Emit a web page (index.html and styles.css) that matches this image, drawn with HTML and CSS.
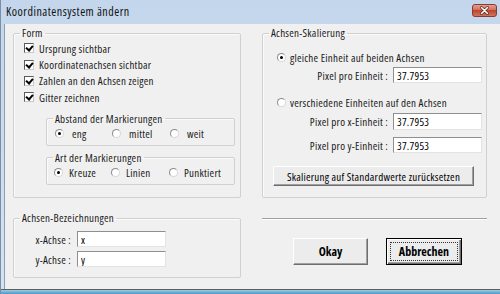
FILE: index.html
```html
<!DOCTYPE html>
<html lang="de">
<head>
  <meta charset="UTF-8" />
  <title>Koordinatensystem ändern</title>
  <link rel="stylesheet" href="styles.css">
</head>
<body>
  <div class="window">
    <div class="titlebar">
      <span class="title">Koordinatensystem ändern</span>
      <svg class="close" width="25" height="13" viewBox="0 0 25 13">
        <defs>
          <linearGradient id="red" x1="0" y1="0" x2="0" y2="1">
            <stop offset="0" stop-color="#e8a493"/>
            <stop offset="0.45" stop-color="#d2705d"/>
            <stop offset="0.5" stop-color="#c0432f"/>
            <stop offset="1" stop-color="#d07a5e"/>
          </linearGradient>
        </defs>
        <rect x="0.5" y="0.5" width="24" height="12" rx="2.5" fill="url(#red)" stroke="#8a3a2e"/>
        <path d="M9.5 3.5 L15.5 9.5 M15.5 3.5 L9.5 9.5" stroke="#5a2018" stroke-width="3" stroke-linecap="round"/>
        <path d="M9.5 3.5 L15.5 9.5 M15.5 3.5 L9.5 9.5" stroke="#ffffff" stroke-width="1.6" stroke-linecap="round"/>
      </svg>
    </div>

    <div class="client">
      <div class="top-row">
        <!-- Form -->
        <fieldset class="group group-form">
          <legend>Form</legend>
          <div class="checks">
            <label class="opt"><span class="check on"></span>Ursprung sichtbar</label>
            <label class="opt"><span class="check on"></span>Koordinatenachsen sichtbar</label>
            <label class="opt"><span class="check on"></span>Zahlen an den Achsen zeigen</label>
            <label class="opt"><span class="check on"></span>Gitter zeichnen</label>
          </div>
          <fieldset class="group sub sub-first">
            <legend>Abstand der Markierungen</legend>
            <div class="radios">
              <label class="opt"><span class="radio on"></span>eng</label>
              <label class="opt"><span class="radio"></span>mittel</label>
              <label class="opt"><span class="radio"></span>weit</label>
            </div>
          </fieldset>
          <fieldset class="group sub">
            <legend>Art der Markierungen</legend>
            <div class="radios tight">
              <label class="opt"><span class="radio on"></span>Kreuze</label>
              <label class="opt"><span class="radio"></span>Linien</label>
              <label class="opt"><span class="radio"></span>Punktiert</label>
            </div>
          </fieldset>
        </fieldset>

        <!-- Achsen-Skalierung -->
        <fieldset class="group group-scale">
          <legend>Achsen-Skalierung</legend>
          <label class="opt scale-radio first"><span class="radio on"></span>gleiche Einheit auf beiden Achsen</label>
          <div class="field-row r1"><span>Pixel pro Einheit :</span><input class="box" value="37.7953"></div>
          <label class="opt scale-radio second"><span class="radio"></span>verschiedene Einheiten auf den Achsen</label>
          <div class="field-row r2"><span>Pixel pro x-Einheit :</span><input class="box tall" value="37.7953"></div>
          <div class="field-row r3"><span>Pixel pro y-Einheit :</span><input class="box" value="37.7953"></div>
          <button class="btn reset">Skalierung auf Standardwerte zurücksetzen</button>
        </fieldset>
      </div>

      <div class="bottom-row">
        <fieldset class="group group-names">
          <legend>Achsen-Bezeichnungen</legend>
          <div class="names">
            <span>x-Achse :</span><input class="box" value="x">
            <span>y-Achse :</span><input class="box" value="y">
          </div>
        </fieldset>

        <div class="actions">
          <div class="separator"></div>
          <div class="buttons">
            <button class="btn big">Okay</button>
            <button class="btn big default"><span class="focus">Abbrechen</span></button>
          </div>
        </div>
      </div>
    </div>
    <div class="frame-bottom"></div>
  </div>
</body>
</html>
```

FILE: styles.css
```css
* {
  box-sizing: border-box;
}
body {
  margin: 0;
  overflow: hidden;
  background: #f0f0f0;
}
.window {
  width: 500px;
  height: 294px;
  display: flex;
  flex-direction: column;
  background: linear-gradient(#c3d6ec, #d5e3f3);
  border-left: 1px solid #7b8ea4;
  font-family: "Open Sans", sans-serif;
  font-stretch: 75%;
  font-size: 11px;
  letter-spacing: 0.25px;
  color: #1a1a1a;
}
.titlebar {
  height: 24px;
  flex: none;
  display: flex;
  align-items: flex-start;
  justify-content: space-between;
  padding: 5px 3px 0 5px;
}
.title {
  font-size: 12px;
  letter-spacing: 0.5px;
  line-height: 14px;
  color: #111;
}
.close {
  margin-top: -1px;
  display: block;
}
.client {
  flex: 1;
  margin-left: 3px;
  border-left: 1px solid #8d9db1;
  background: #f0f0f0;
  padding: 2px 13px 0 8px;
}
.frame-bottom {
  height: 5px;
  flex: none;
  border-top: 1px solid #5e5e5e;
  background: linear-gradient(#9ccbe4, #4f98c4);
}

/* group boxes */
.group {
  margin: 0;
  padding: 0;
  border: 1px solid #d0d0d0;
  border-radius: 2px;
  box-shadow: inset 1px 1px #fbfbfb;
  min-width: 0;
}
.group legend {
  line-height: 14px;
  padding: 0 2px;
  margin-left: 6px;
}
.top-row {
  display: flex;
  gap: 21px;
  height: 172px;
}
.group-form {
  width: 229px;
}
.group-scale {
  width: 226px;
}
.opt {
  display: flex;
  align-items: center;
  white-space: nowrap;
}

/* checkbox */
.checks {
  display: grid;
  grid-auto-rows: 16.4px;
  padding-left: 10px;
}
.check {
  width: 10px;
  height: 10px;
  margin-right: 5px;
  border: 1px solid #5a5a5a;
  border-right-color: #c8c8c8;
  border-bottom-color: #c8c8c8;
  background: #fff;
  position: relative;
}
.check.on::after {
  content: "";
  position: absolute;
  left: 2px;
  top: 0px;
  width: 3px;
  height: 5px;
  border: solid #000;
  border-width: 0 2px 2px 0;
  transform: rotate(40deg);
}

/* radio */
.radio {
  width: 9px;
  height: 9px;
  border-radius: 50%;
  border: 1px solid #8c8c8c;
  border-right-color: #d8d8d8;
  border-bottom-color: #d8d8d8;
  background: #fff;
  margin-right: 8px;
  flex: none;
  position: relative;
}
.radio.on::after {
  content: "";
  position: absolute;
  left: 2px;
  top: 2px;
  width: 3px;
  height: 3px;
  border-radius: 50%;
  background: #000;
}

/* sub groups */
.sub {
  margin: 5px 5px 0 32px;
  padding-bottom: 3px;
}
.sub-first {
  margin-top: 6px;
}
.radios {
  display: grid;
  grid-template-columns: 57px 58px 55px;
  grid-auto-rows: 16px;
  padding-left: 8px;
}
.radios.tight .radio {
  margin-right: 6px;
}
.radios.tight {
  padding-left: 7px;
}

/* right group */
.scale-radio {
  height: 16px;
  padding-left: 14px;
}
.scale-radio .radio {
  margin-right: 4px;
}
.scale-radio.first {
  margin-top: 9px;
}
.scale-radio.second {
  margin-top: 11px;
}
.field-row {
  display: flex;
  justify-content: flex-end;
  align-items: center;
  gap: 5px;
  padding-right: 4px;
}
.field-row.r1 {
  margin-top: 2px;
}
.field-row.r2 {
  margin-top: 3px;
}
.field-row.r3 {
  margin-top: 7px;
}
.box {
  width: 89px;
  height: 16px;
  padding: 0 3px;
  margin: 0;
  font: inherit;
  letter-spacing: inherit;
  color: #000;
  border: 1px solid #8f8f8f;
  border-right-color: #e3e3e3;
  border-bottom-color: #e3e3e3;
  background: #fff;
  outline: none;
}
.box.tall {
  height: 17px;
}
.btn {
  font: inherit;
  letter-spacing: inherit;
  margin: 0;
  padding: 0;
  background: #ececec;
  border: 1px solid;
  border-color: #fff #6e6e6e #6e6e6e #fff;
  box-shadow: inset -1px -1px #a0a0a0;
  color: #000;
  white-space: nowrap;
}
.reset {
  display: block;
  width: 201px;
  height: 20px;
  margin: 13px 0 0 10px;
}

/* bottom */
.bottom-row {
  display: flex;
  gap: 21px;
  margin-top: 13px;
}
.group-names {
  width: 229px;
  height: 67px;
}
.names {
  display: grid;
  grid-template-columns: 57px 90px;
  column-gap: 6px;
  row-gap: 4px;
  align-items: center;
  margin-top: 6px;
}
.names span {
  text-align: right;
}
.actions {
  width: 226px;
  padding-top: 7px;
}
.separator {
  height: 2px;
  border-top: 1px solid #a0a0a0;
  border-bottom: 1px solid #fff;
}
.buttons {
  display: flex;
  gap: 18px;
  padding-left: 31px;
  margin-top: 18px;
}
.btn.big {
  width: 75px;
  height: 27px;
  font-weight: bold;
  font-size: 12px;
  letter-spacing: 0;
}
.btn.default {
  width: 76px;
  border: 1px solid #000;
  box-shadow: inset 1px 1px #fff, inset -1px -1px #6e6e6e, inset -2px -2px #a0a0a0;
  padding: 3px;
}
.focus {
  display: flex;
  align-items: center;
  justify-content: center;
  height: 100%;
  border: 1px dotted #333;
}
```
